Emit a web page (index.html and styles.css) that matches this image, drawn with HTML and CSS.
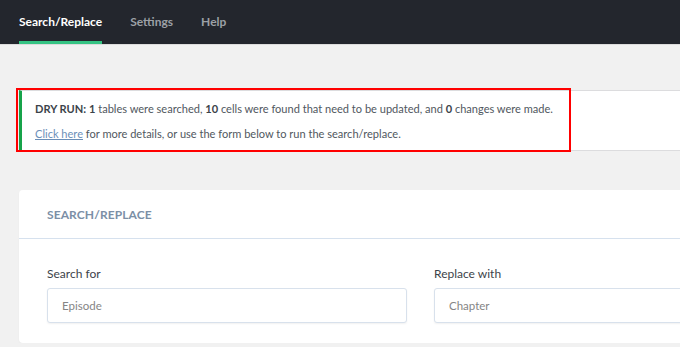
FILE: index.html
```html
<!DOCTYPE html>
<html lang="en">

<head>
    <meta charset="UTF-8">
    <title>Search/Replace</title>
    <link rel="stylesheet" href="styles.css">
</head>

<body>
    <nav class="tabs">
        <a class="tab active" href="#">Search/Replace</a>
        <a class="tab" href="#">Settings</a>
        <a class="tab" href="#">Help</a>
    </nav>

    <main class="content">
        <div class="notice">
            <p><strong>DRY RUN:</strong> <strong>1</strong> tables were searched, <strong>10</strong> cells were found that need to be updated, and <strong>0</strong> changes were made.</p>
            <p><a href="#">Click here</a> for more details, or use the form below to run the search/replace.</p>
            <span class="highlight"></span>
        </div>

        <section class="card">
            <div class="card-header">Search/Replace</div>
            <div class="card-body">
                <div class="field">
                    <label for="search-for">Search for</label>
                    <input id="search-for" type="text" placeholder="Episode">
                </div>
                <div class="field">
                    <label for="replace-with">Replace with</label>
                    <input id="replace-with" type="text" placeholder="Chapter">
                </div>
            </div>
        </section>
    </main>
</body>

</html>
```

FILE: styles.css
```css
html,
body {
    overflow: hidden;
}

body {
    font-family: Lato, "Noto Sans", sans-serif;
    background: #f1f1f1;
    margin: 0;
    padding: 0;
    color: #50575e;
}

.tabs {
    display: flex;
    gap: 28px;
    height: 44px;
    padding-left: 19px;
    background: #23262d;
    border-bottom: 1px solid #dcdcdc;
}

.tab {
    display: flex;
    align-items: center;
    padding-top: 1px;
    font-size: 12px;
    font-weight: bold;
    color: #9ca0a6;
    text-decoration: none;
    border-bottom: 3px solid transparent;
}

.tab.active {
    color: #fff;
    border-bottom-color: #35c383;
}

.content {
    padding: 45px 0 0 19px;
}

.notice {
    position: relative;
    width: 800px;
    height: 61px;
    box-sizing: border-box;
    padding: 10px 0 0 13px;
    background: #fff;
    border: 1px solid #dcdcde;
    border-left: 3px solid #16a34a;
    font-size: 11.05px;
}

.notice p {
    margin: 0 0 10px;
    line-height: 15px;
}

.notice strong {
    color: #3c434a;
}

.notice a {
    color: #6b8fb8;
}

.highlight {
    position: absolute;
    left: -6px;
    top: -3px;
    width: 551px;
    height: 60px;
    border: 2px solid #ff0000;
}

.card {
    margin-top: 39px;
    width: 803px;
    background: #fff;
    border-radius: 4px;
    box-shadow: 0 1px 2px rgba(0, 0, 0, 0.04);
}

.card-header {
    height: 48px;
    padding-left: 28px;
    display: flex;
    align-items: center;
    border-bottom: 1px solid #d6e1ee;
    font-size: 12px;
    font-weight: bold;
    letter-spacing: 0.1px;
    text-transform: uppercase;
    color: #7b8fa6;
}

.card-body {
    display: grid;
    grid-template-columns: 360px 360px;
    column-gap: 27px;
    padding: 27px 28px 20px;
}

.field label {
    display: block;
    font-size: 12px;
    line-height: 15px;
    color: #3c434a;
    margin-bottom: 7px;
}

.field input {
    width: 100%;
    height: 35px;
    box-sizing: border-box;
    padding: 0 14px;
    border: 1px solid #d8e1ec;
    border-radius: 3px;
    box-shadow: 0 1px 2px rgba(0, 0, 0, 0.06);
    font-family: inherit;
    font-size: 11.5px;
    color: #50575e;
}

.field input::placeholder {
    color: #858585;
}
```
